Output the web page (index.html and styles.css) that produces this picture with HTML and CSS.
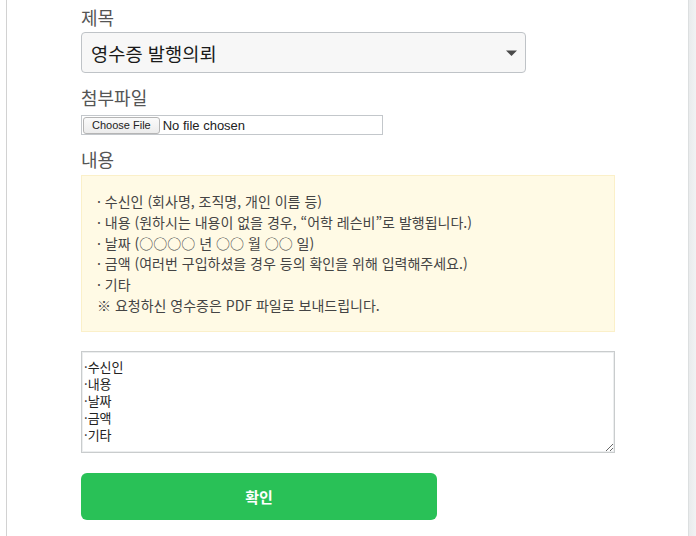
FILE: index.html
```html
<!DOCTYPE html>
<html lang="ko">
<head>
<meta charset="utf-8">
<title>영수증 발행의뢰</title>
<link rel="stylesheet" href="styles.css">
</head>
<body>
<div class="page">
  <div class="frame">
    <form class="form">
      <div class="label">제목</div>
      <div class="select">
        <span class="select-text">영수증 발행의뢰</span>
        <svg class="select-arrow" width="11" height="6" viewBox="0 0 11 6"><path d="M0 0.5H11L5.5 6Z" fill="#4a4a4a"/></svg>
      </div>

      <div class="label label-gap">첨부파일</div>
      <div class="file">
        <span class="file-btn">Choose File</span>
        <span class="file-name">No file chosen</span>
      </div>

      <div class="label label-gap">내용</div>
      <div class="notice">
        <p>· 수신인 (회사명, 조직명, 개인 이름 등)</p>
        <p>· 내용 (원하시는 내용이 없을 경우, “어학 레슨비”로 발행됩니다.)</p>
        <p>· 날짜 (○○○○ 년 ○○ 월 ○○ 일)</p>
        <p>· 금액 (여러번 구입하셨을 경우 등의 확인을 위해 입력해주세요.)</p>
        <p>· 기타</p>
        <p>※ 요청하신 영수증은 PDF 파일로 보내드립니다.</p>
      </div>

      <textarea class="content">·수신인
·내용
·날짜
·금액
·기타</textarea>

      <button type="button" class="submit">확인</button>
    </form>
  </div>
  <div class="rail"></div>
</div>
</body>
</html>
```

FILE: styles.css
```css
html, body {
  margin: 0;
  padding: 0;
  background: #ffffff;
}

body {
  font-family: "Noto Sans CJK KR", "Liberation Sans", sans-serif;
  color: #222222;
}

.page {
  display: flex;
  height: 536px;
  overflow: hidden;
}

.frame {
  margin-left: 6px;
  border-left: 1px solid #d2d2d2;
  width: 682px;
  padding-left: 74px;
  box-sizing: border-box;
}

.rail {
  flex: 1;
  border-left: 1px solid #dcdfe0;
  background: linear-gradient(to right, #e9ebec, #f1f2f3);
}

.form {
  width: 534px;
  display: flex;
  flex-direction: column;
  align-items: flex-start;
  padding-top: 6px;
}

.label {
  font-size: 18px;
  line-height: 22px;
  color: #555555;
  margin-bottom: 4px;
}

.label-gap {
  margin-top: 13px;
}

.select {
  width: 445px;
  height: 41px;
  box-sizing: border-box;
  border: 1px solid #bfc3c7;
  border-radius: 4px;
  background: #f7f7f7;
  display: flex;
  align-items: center;
  justify-content: space-between;
  padding: 0 8px 0 9px;
}

.select-text {
  font-size: 18.7px;
  color: #1a1a1a;
  line-height: 22px;
}

.select-arrow {
  display: block;
  margin-top: 1px;
}

.file {
  margin-top: 3px;
  width: 302px;
  height: 20px;
  box-sizing: border-box;
  border: 1px solid #c3c7cb;
  display: flex;
  align-items: center;
  gap: 3px;
  padding-left: 1px;
}

.file-btn {
  font-family: "Liberation Sans", sans-serif;
  font-size: 11px;
  line-height: 15px;
  color: #222;
  border: 1px solid #b5b5b5;
  border-radius: 3px;
  background: linear-gradient(#fbfbfb, #ececec);
  padding: 0 8px;
  height: 15px;
}

.file-name {
  font-family: "Liberation Sans", sans-serif;
  font-size: 13px;
  color: #222;
}

.notice {
  margin-top: 1px;
  width: 534px;
  box-sizing: border-box;
  background: #fffae5;
  border: 1px solid #fbf0c9;
  padding: 15px 15px;
  font-size: 14px;
  line-height: 20.8px;
  color: #444444;
}

.notice p {
  margin: 0;
  white-space: nowrap;
}

.content {
  margin-top: 19px;
  width: 534px;
  height: 102px;
  box-sizing: border-box;
  border: 1px solid #c9cccd;
  box-shadow: inset 0 0 0 1px #eceeef;
  padding: 6px 2px;
  font-family: "Noto Sans CJK KR", "Liberation Sans", sans-serif;
  font-size: 13px;
  line-height: 17px;
  color: #222;
  resize: vertical;
  outline: none;
}

.submit {
  margin-top: 20px;
  width: 356px;
  height: 47px;
  border: none;
  border-radius: 6px;
  background: #29c157;
  color: #ffffff;
  font-family: "Noto Sans CJK KR", "Liberation Sans", sans-serif;
  font-size: 15px;
  font-weight: 700;
  cursor: pointer;
}
```
